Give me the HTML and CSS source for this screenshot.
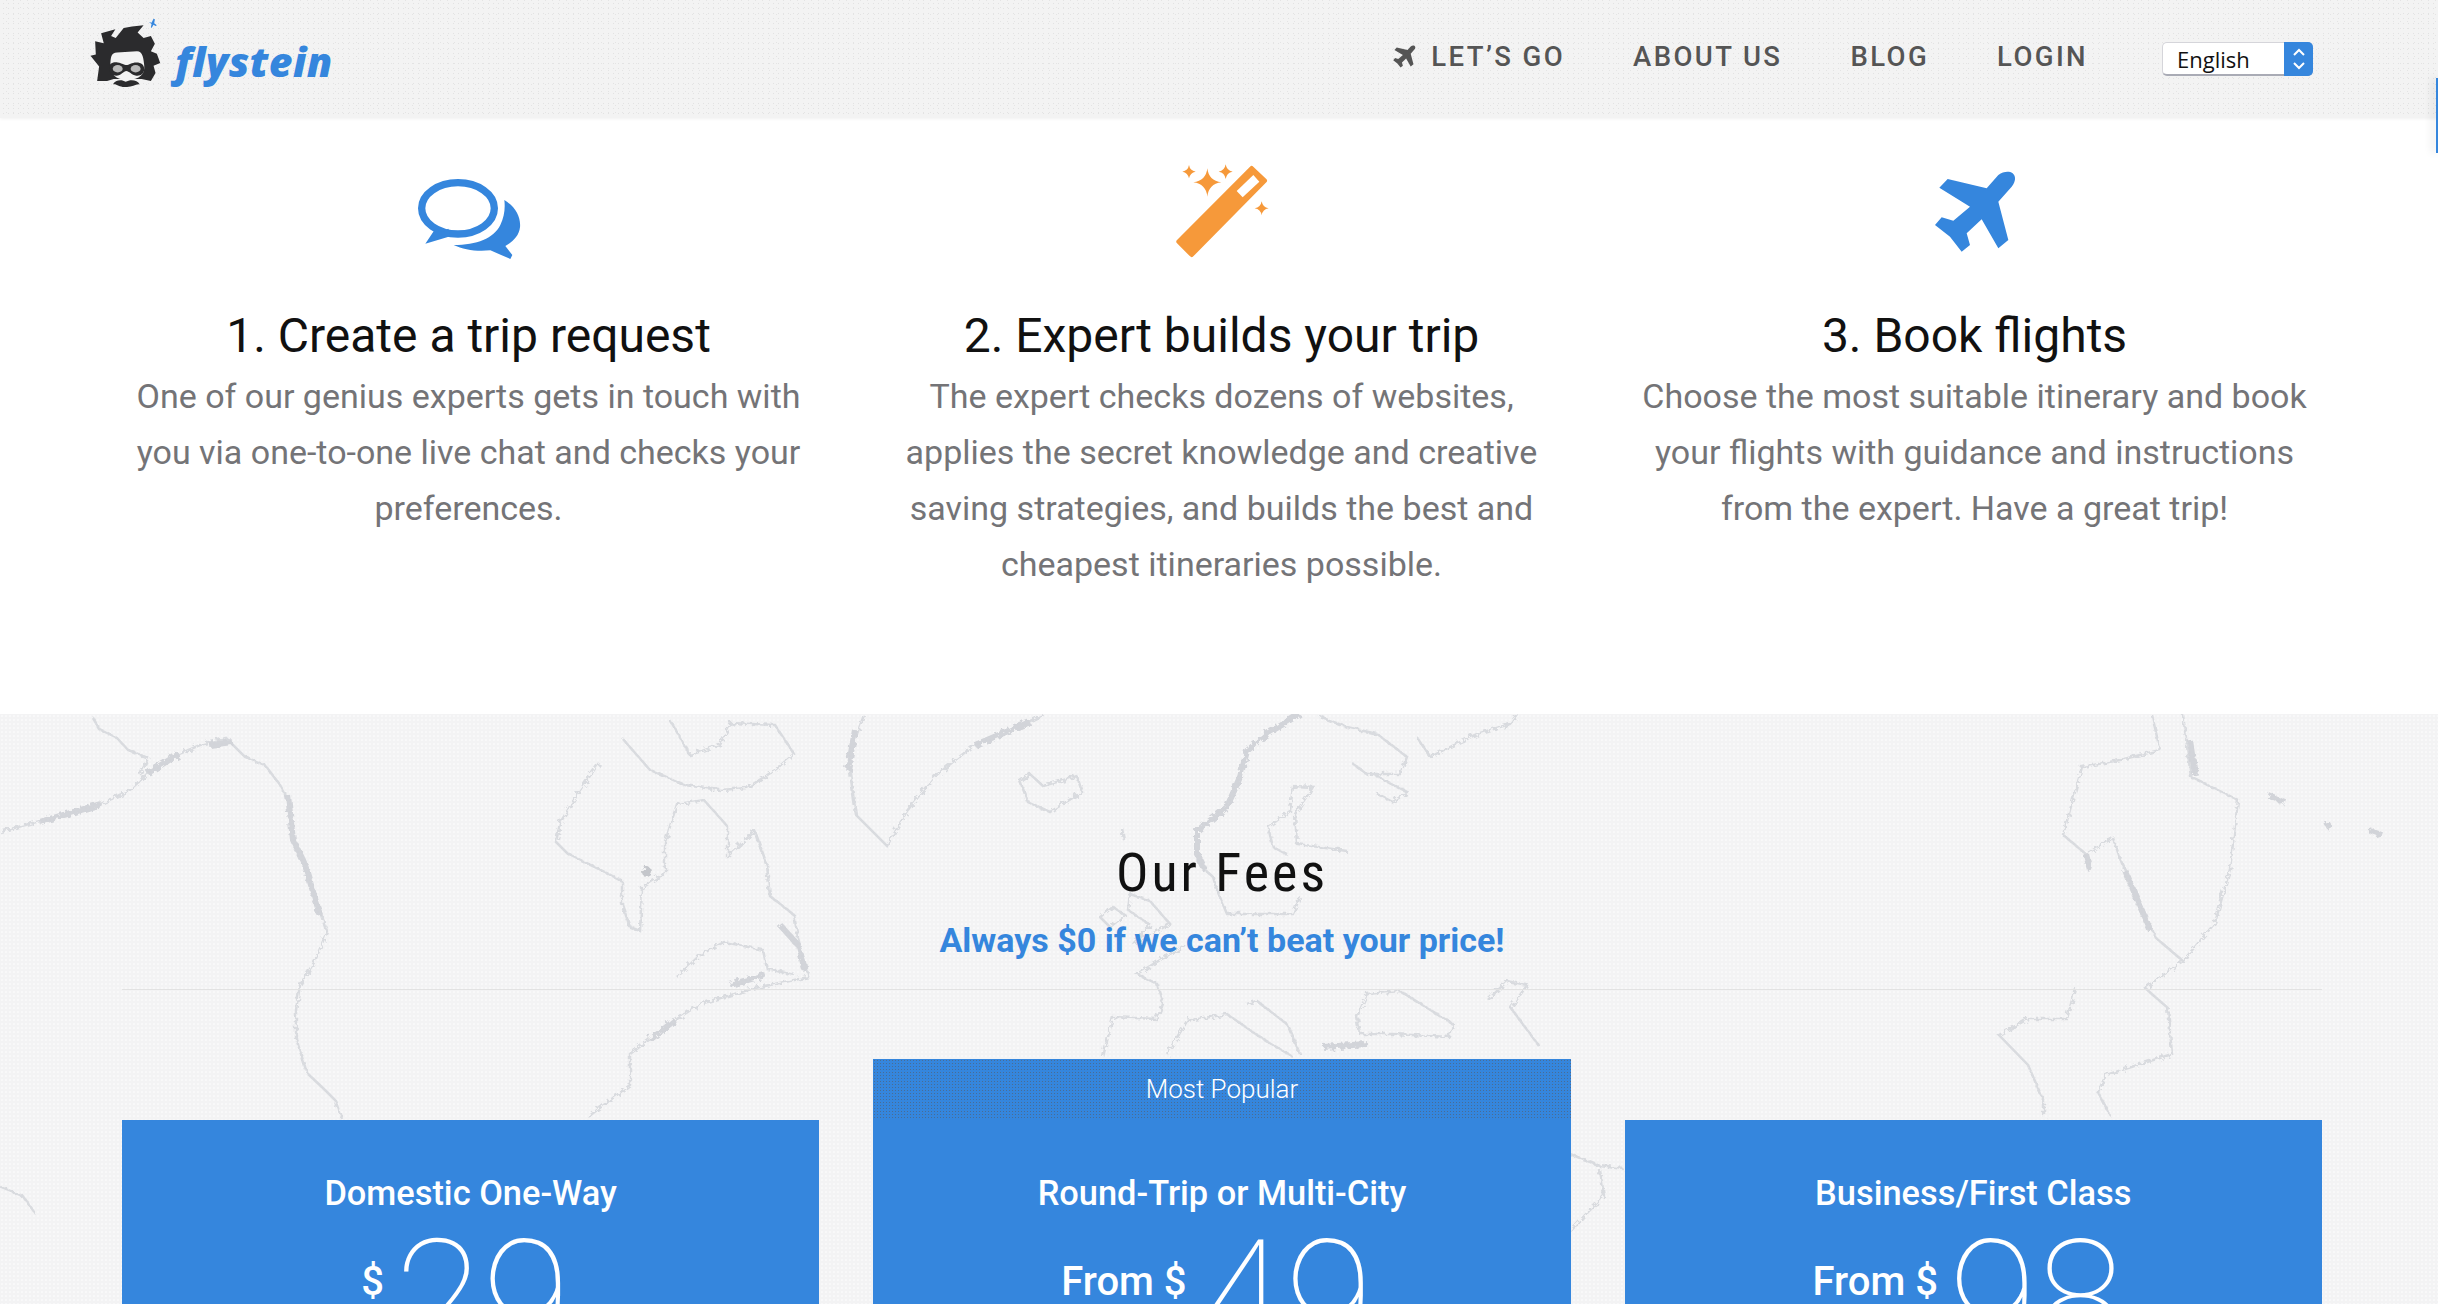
FILE: index.html
```html
<!DOCTYPE html>
<html lang="en">
<head>
    <meta charset="UTF-8">
    <title>Flystein</title>
    <link rel="stylesheet" href="styles.css">
</head>
<body>
    <header class="site-header">
        <a class="logo" href="#">
            <svg class="logo-mark" viewBox="80 40 240 220">
                <path class="logo-hair" d="M110 236 L116 192 L90 160 L106 156 L104 116 L130 122 L122 92 L165 80 L152 100 L166 106 L190 76 L215 72 L250 68 L232 90 L250 106 L272 100 L284 124 L272 146 L290 154 L300 182 L280 190 L286 212 L272 236 L244 230 L160 230 L140 236 Z"/>
                <path class="logo-face" d="M150 190 C150 165 152 150 170 150 L230 146 C248 146 250 170 252 190 C254 215 240 232 200 232 C165 232 150 215 150 190 Z"/>
                <path class="logo-hair" d="M146 196 C146 182 160 178 172 180 C186 182 192 188 198 188 C206 188 214 180 228 180 C244 180 252 188 252 200 C252 214 240 222 228 220 C214 218 206 206 198 206 C190 206 182 220 168 220 C154 220 146 210 146 196 Z"/>
                <ellipse class="logo-lens" cx="172" cy="199" rx="15" ry="11"/>
                <ellipse class="logo-lens" cx="226" cy="199" rx="15" ry="11"/>
                <path class="logo-hair" d="M158 246 C164 232 184 230 196 238 C210 230 232 232 238 246 C226 244 214 256 196 254 C178 256 170 244 158 246 Z"/>
                <path class="logo-star" d="M266 58 L274 60 L280 48 L284 50 L282 62 L290 68 L286 70 L280 66 L274 76 L272 74 L274 64 Z"/>
            </svg>
            <span class="logo-text">flystein</span>
        </a>
        <nav class="main-nav">
            <a href="#">
                <svg class="nav-plane" viewBox="75 60 245 250">
                    <path d="M230 115 L113 87 L88 113 L180 170 L130 212 L95 202 L75 225 L120 260 L155 305 L180 285 L170 250 L215 208 L265 295 L295 270 L265 155 L305 110 C318 95 318 78 308 70 C296 62 280 65 265 75 Z"/>
                </svg>
                LET’S GO
            </a>
            <a href="#">ABOUT US</a>
            <a href="#">BLOG</a>
            <a href="#">LOGIN</a>
        </nav>
        <div class="lang-select">
            <select>
                <option>English</option>
                <option>Deutsch</option>
            </select>
            <span class="lang-arrows">
                <svg viewBox="0 0 16 26"><path d="M3 9 L8 4 L13 9 M3 17 L8 22 L13 17"/></svg>
            </span>
        </div>
    </header>

    <div class="side-tab"></div>

    <section class="steps">
        <div class="step">
            <svg class="step-icon" width="160" height="120" viewBox="26 0 480 360">
                <ellipse class="ring" cx="233" cy="175" rx="109" ry="77"/>
                <path class="blue" d="M165 236 L135 281 L210 259 L204 236 L186 246 Z"/>
                <path class="blue" d="M372 150 C405 170 422 200 419 232 C416 258 398 275 375 288 L396 315 L390 327 L330 301 C290 305 250 300 220 285 C290 285 340 265 360 225 C372 200 375 175 372 150 Z"/>
            </svg>
            <h3>1. Create a trip request</h3>
            <p>One of our genius experts gets in touch with you via one-to-one live chat and checks your preferences.</p>
        </div>
        <div class="step">
            <svg class="step-icon" width="140" height="120" viewBox="6 0 420 360">
                <path class="orange wand" d="M305 55 L344 92 L125 314 L86 275 Z"/>
                <path class="slot" d="M310 75 L328 95 L278 142 L260 123 Z"/>
                <path class="orange" d="M172 55 Q176 92 214 97 Q176 102 172 140 Q168 102 130 97 Q168 92 172 55 Z"/>
                <path class="orange" d="M117 45 Q120 62 137 65 Q120 68 117 85 Q114 68 97 65 Q114 62 117 45 Z"/>
                <path class="orange" d="M227 43 Q230 62 248 65 Q230 68 227 87 Q224 68 206 65 Q224 62 227 43 Z"/>
                <path class="orange" d="M335 154 Q338 172 356 175 Q338 178 335 196 Q332 178 314 175 Q332 172 335 154 Z"/>
            </svg>
            <h3>2. Expert builds your trip</h3>
            <p>The expert checks dozens of websites, applies the secret knowledge and creative saving strategies, and builds the best and cheapest itineraries possible.</p>
        </div>
        <div class="step">
            <svg class="step-icon" width="120" height="120" viewBox="15 0 360 360">
                <path class="blue" d="M230 115 L113 87 L88 113 L180 170 L130 212 L95 202 L75 225 L120 260 L155 305 L180 285 L170 250 L215 208 L265 295 L295 270 L265 155 L305 110 C318 95 318 78 308 70 C296 62 280 65 265 75 Z"/>
            </svg>
            <h3>3. Book flights</h3>
            <p>Choose the most suitable itinerary and book your flights with guidance and instructions from the expert. Have a great trip!</p>
        </div>
    </section>

    <section class="fees">
        <!-- world map behind the fees, coords are page pixels -->
        <svg class="world-map" viewBox="0 714 2438 590">
            <defs>
                <filter id="rough" x="-5%" y="-5%" width="110%" height="110%">
                    <feTurbulence type="fractalNoise" baseFrequency="0.22" numOctaves="2" seed="4"/>
                    <feDisplacementMap in="SourceGraphic" scale="7"/>
                </filter>
            </defs>
            <g filter="url(#rough)">
                <path d="M0 832 L47 819 L101 804 L130 790 L148 773 L179 754 L200 745 L226 738 L245 757 L265 765 L280 785 L288 800 L292 835 L305 860 L311 881 L320 910 L327 931 L315 961 L300 985 L296 1010 L296 1038 L307 1073 L325 1090 L335 1100 L342 1119"/>
                <path class="thick" d="M40 822 L101 804 M148 773 L179 754 M210 745 L232 742 M288 795 L293 840 L305 865 L320 915"/>
                <path d="M93 718 L100 730 L117 738 L128 750 L148 758 L140 775"/>
                <path d="M599 763 L580 790 L560 823 L556 842 L568 854 L599 869 L622 881 L622 904 L630 927 L640 931 L642 888 L665 873 L665 842 L677 804 L704 800 L728 827 L728 856 L755 831 L767 865 L770 896 L794 915 L798 938 L809 977 L755 988 L700 1004 L677 1019 L630 1054 L630 1085 L588 1117"/>
                <path d="M677 977 L700 955 L724 942 L763 950 L767 969 L795 975"/>
                <path class="thick" d="M780 925 L798 945 L805 970 M730 985 L765 975 M650 1040 L675 1020"/>
                <path d="M622 738 L650 770 L685 785 L720 790 L747 788 L775 770 L794 754 L775 725 L731 723 L720 745 L690 755 L670 720"/>
                <circle class="blob" cx="647" cy="872" r="5"/>
                <path d="M864 715 L848 758 L856 815 L887 846 L907 811 L934 777 L973 746 L1000 735 L1043 715"/>
                <path class="thick" d="M855 730 L848 770 M975 745 L1030 722"/>
                <path d="M1020 781 L1030 774 L1043 786 L1077 776 L1082 792 L1050 812 L1028 802 Z"/>
                <path d="M1122 828 L1124 840"/>
                <path class="thick" d="M1300 714 L1267 734 L1247 751 L1240 777 L1227 807 L1197 831 L1197 854 L1205 870"/>
                <path d="M1205 870 L1213 877 L1217 890 L1227 914 L1253 914 L1293 914 L1300 897"/>
                <path d="M1273 847 L1268 827 L1290 811 L1293 786 L1313 787 L1295 814 L1297 844 L1347 851 M1273 847 L1288 855"/>
                <path d="M1113 907 L1100 917 L1110 927 L1125 915 Z"/>
                <path d="M1130 894 L1150 901 L1170 924 L1133 944 L1150 925 L1128 910 Z"/>
                <path d="M1185 945 L1137 974 L1157 984 L1163 1004 L1157 1019 L1113 1017 L1103 1057"/>
                <path d="M1167 1054 L1187 1021 L1227 1014 L1260 1037 L1293 1057"/>
                <path d="M1247 1004 L1257 1001 L1287 1024 L1300 1054"/>
                <path d="M1367 994 L1400 991 L1453 1024 L1450 1037 L1393 1034 L1360 1034 L1357 1017 Z"/>
                <path class="thick" d="M1323 1047 L1367 1044"/>
                <path d="M1488 1000 L1507 981 L1527 985 L1511 1008 L1539 1046"/>
                <path d="M1320 717 L1347 727 L1377 734 L1407 757 L1400 774 L1367 774 L1353 764 M1377 794 L1393 802 L1407 792 L1375 775"/>
                <path d="M1417 737 L1430 757 L1450 747 L1477 734 L1510 724 L1517 714"/>
                <path d="M1570 1154 L1600 1166 L1624 1169 M1600 1170 L1604 1196 L1585 1215 L1571 1231"/>
                <path d="M2152 715 L2160 750 L2120 760 L2082 767 L2063 835 L2086 854 L2113 838 L2121 861 L2156 938 L2183 961 L2145 988 L2168 1008 L2172 1054 L2106 1075 L2098 1092 L2110 1115"/>
                <path d="M2075 988 L2067 1019 L2028 1019 L1999 1035 L2028 1065 L2044 1102 L2044 1117"/>
                <path d="M2183 715 L2191 777 L2238 800 L2230 869 L2215 923 L2183 961"/>
                <path class="thick" d="M2090 870 L2086 854 M2125 870 L2150 930 M2195 775 L2190 740"/>
                <path class="thick" d="M2269 796 L2285 802 M2327 823 L2330 828 M2370 831 L2382 835"/>
                <path d="M0 1187 L23 1196 L35 1213"/>
            </g>
        </svg>

        <div class="fees-inner">
            <h2>Our Fees</h2>
            <p class="fees-sub">Always $0 if we can’t beat your price!</p>
            <hr class="fees-line">
            <div class="fee-cards">
                <div class="fee-card">
                    <h4>Domestic One-Way</h4>
                    <div class="fee-price"><span class="prefix">$</span><span class="amount">29</span></div>
                </div>
                <div class="fee-card popular">
                    <div class="popular-tag">Most Popular</div>
                    <h4>Round-Trip or Multi-City</h4>
                    <div class="fee-price"><span class="prefix">From $</span><span class="amount">49</span></div>
                </div>
                <div class="fee-card">
                    <h4>Business/First Class</h4>
                    <div class="fee-price"><span class="prefix">From $</span><span class="amount">98</span></div>
                </div>
            </div>
        </div>
    </section>
</body>
</html>
```
FILE: styles.css
```css
* {
    box-sizing: border-box;
}

body {
    margin: 0;
    height: 100vh;
    overflow: hidden;
    font-family: Roboto, "Liberation Sans", sans-serif;
    background-color: #fff;
}

a {
    text-decoration: none;
}

/* header */
.site-header {
    height: 118px;
    display: flex;
    align-items: center;
    padding: 0 125px 0 87px;
    background-color: #f3f3f3;
    background-image:
        radial-gradient(#e2e2e2 0.7px, transparent 1px),
        radial-gradient(#e4e4e4 0.7px, transparent 1px);
    background-size: 5px 5px, 7px 7px;
    background-position: 1px 1px, 3px 4px;
    box-shadow: 0 1px 3px rgba(0, 0, 0, 0.06);
    position: relative;
    z-index: 2;
}

.logo {
    display: flex;
    align-items: center;
    margin-right: auto;
}

.logo-mark {
    width: 80px;
    height: 73px;
    margin: -14px 8px 0 0;
}

.logo-hair {
    fill: #2b2b2d;
}

.logo-face {
    fill: #f3f3f3;
}

.logo-lens {
    fill: #b9b9b9;
}

.logo-star {
    fill: #3586dd;
}

.logo-text {
    font-family: "Open Sans", sans-serif;
    font-weight: 800;
    font-style: italic;
    font-size: 41px;
    letter-spacing: 0.4px;
    color: #3586dd;
    margin-top: 4px;
}

.main-nav {
    display: flex;
    gap: 68px;
    margin: 0 74px 6px 0;
}

.main-nav a {
    display: flex;
    align-items: center;
    font-size: 27.5px;
    font-weight: 500;
    letter-spacing: 2.4px;
    color: #555;
}

.nav-plane {
    width: 23px;
    height: 23px;
    margin-right: 15px;
    fill: #555;
}

.lang-select {
    position: relative;
    width: 151px;
    height: 34px;
}

.lang-select select {
    width: 100%;
    height: 100%;
    appearance: none;
    border: 1px solid #d5d5da;
    border-bottom: 2px solid #a9abb5;
    border-radius: 5px;
    background: #fff;
    padding: 0 0 0 14px;
    font-family: "Open Sans", sans-serif;
    font-size: 22px;
    color: #111;
}

.lang-arrows {
    position: absolute;
    top: 0;
    right: 0;
    width: 29px;
    height: 34px;
    display: flex;
    align-items: center;
    justify-content: center;
    background: #3586dd;
    border-radius: 0 5px 5px 0;
    pointer-events: none;
}

.lang-arrows svg {
    width: 16px;
    height: 26px;
    fill: none;
    stroke: #fff;
    stroke-width: 2;
}

.side-tab {
    position: fixed;
    top: 78px;
    right: 0;
    width: 2px;
    height: 75px;
    background: #3586dd;
    box-shadow: -3px 0 8px rgba(0, 0, 0, 0.2);
    z-index: 3;
}

/* how it works */
.steps {
    height: 596px;
    padding: 32px 87px 0 92px;
    display: grid;
    grid-template-columns: repeat(3, 1fr);
    background: #fff;
}

.step {
    text-align: center;
}

.step-icon {
    display: block;
    margin: 0 auto;
}

.blue {
    fill: #3586dd;
}

.ring {
    fill: none;
    stroke: #3586dd;
    stroke-width: 22;
}

.orange {
    fill: #f6993a;
}

.wand {
    stroke: #f6993a;
    stroke-width: 14;
    stroke-linejoin: round;
}

.slot {
    fill: #fff;
}

.step h3 {
    margin: 40px 0 0;
    font-size: 48px;
    font-weight: 400;
    line-height: 52px;
    color: #111;
}

.step p {
    width: 680px;
    margin: 6px auto 0;
    font-size: 34px;
    font-weight: 400;
    line-height: 56px;
    color: #747477;
}

/* fees */
.fees {
    position: relative;
    height: 590px;
    overflow: hidden;
    background-color: #f3f3f4;
    background-image: radial-gradient(#f8f8f9 0.7px, transparent 1px);
    background-size: 4px 4px;
}

.world-map {
    position: absolute;
    top: 0;
    left: 0;
    width: 2438px;
    height: 590px;
    fill: none;
    stroke: #d9dbdf;
    stroke-width: 2.5;
}

.world-map .thick {
    stroke: #d2d4d9;
    stroke-width: 6;
}

.world-map .blob {
    fill: #c4c6cb;
    stroke: none;
}

.fees-inner {
    position: relative;
    padding: 0 116px 0 122px;
    text-align: center;
}

.fees h2 {
    margin: 0;
    padding-top: 128px;
    font-size: 54px;
    font-weight: 400;
    font-stretch: 75%;
    letter-spacing: 3px;
    line-height: 62px;
    color: #111;
}

.fees-sub {
    margin: 15px 0 0;
    font-size: 34px;
    font-weight: 700;
    line-height: 42px;
    color: #3586dd;
}

.fees-line {
    margin: 28px 0 0;
    border: 0;
    border-top: 1px solid #e2e2e2;
}

.fee-cards {
    display: grid;
    grid-template-columns: repeat(3, 1fr);
    gap: 54px;
    margin-top: 130px;
}

.fee-card {
    position: relative;
    height: 300px;
    padding-top: 50px;
    background: #3586dd;
    color: #fff;
}

.popular-tag {
    position: absolute;
    top: -61px;
    left: 0;
    right: 0;
    height: 61px;
    line-height: 60px;
    font-size: 26px;
    font-weight: 300;
    background-color: #3586dd;
    background-image: radial-gradient(rgba(90, 90, 90, 0.55) 0.7px, transparent 1px);
    background-size: 3px 3px;
}

.fee-card h4 {
    margin: 0;
    font-size: 34.4px;
    font-weight: 500;
    line-height: 46px;
}

.fee-price {
    display: flex;
    justify-content: center;
    align-items: flex-start;
    gap: 11px;
    padding-right: 10px;
    margin-top: 3px;
}

.prefix {
    margin-top: 40px;
    font-size: 40px;
    font-weight: 500;
    line-height: 46px;
}

.amount {
    font-size: 160px;
    font-weight: 100;
    line-height: 160px;
}
```
